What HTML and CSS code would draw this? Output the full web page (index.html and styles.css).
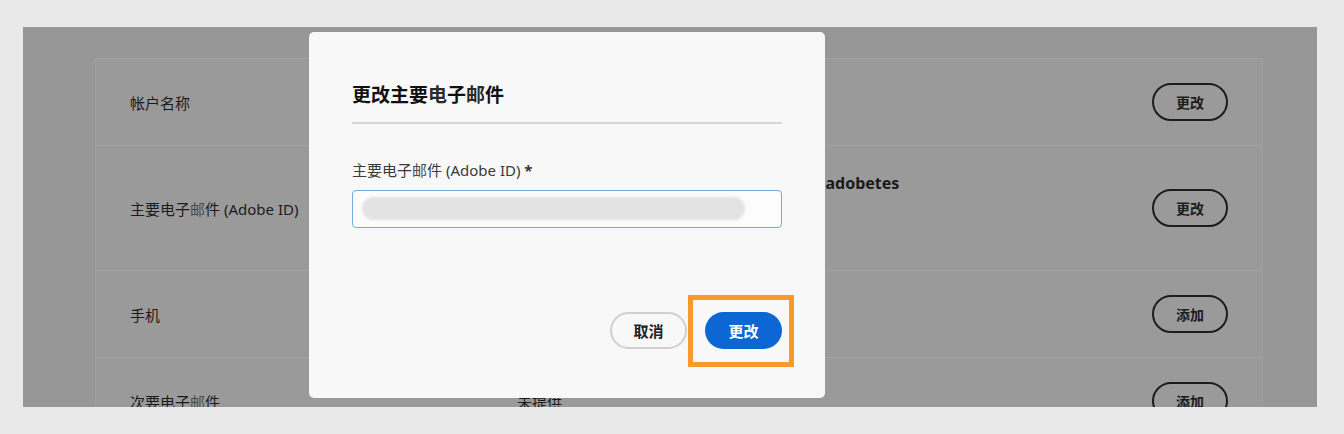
FILE: index.html
```html
<!doctype html>
<html>

<head>
    <title>帐户信息</title>
    <meta charset="utf-8">
    <link rel="stylesheet" href="styles.css">
</head>

<body>
    <div class="frame">
        <div class="card">
            <div class="row row-short">
                <span class="row-label">帐户名称</span>
                <span class="row-value"></span>
                <span class="pill">更改</span>
            </div>
            <div class="row row-tall">
                <span class="row-label">主要电子<span class="faint">邮</span>件 (Adobe ID)</span>
                <span class="row-value">
                    <b class="email">wang.xiaoming.marketing.dept.li012@adobetes</b>
                    <span class="sub">已验证</span>
                </span>
                <span class="pill">更改</span>
            </div>
            <div class="row row-short">
                <span class="row-label">手机</span>
                <span class="row-value"></span>
                <span class="pill">添加</span>
            </div>
            <div class="row row-short">
                <span class="row-label">次要电子<span class="faint">邮</span>件</span>
                <span class="row-value">未提供</span>
                <span class="pill">添加</span>
            </div>
        </div>

        <div class="modal">
            <h2 class="modal-title">更改主要<span class="thin">电</span>子<span class="thin">邮</span>件</h2>
            <label class="field-label">主要电子<span class="faint">邮</span>件 (Adobe ID) <span class="req">*</span></label>
            <div class="field">
                <span class="blurred"></span>
            </div>
            <div class="modal-footer">
                <span class="btn btn-secondary">取消</span>
                <span class="btn btn-primary">更改</span>
            </div>
            <span class="highlight"></span>
        </div>
    </div>
</body>

</html>
```

FILE: styles.css
```css
* {
    box-sizing: border-box;
}

body {
    margin: 0;
    background: #e9e9e9;
    font-family: "Noto Sans", "Noto Sans CJK SC", sans-serif;
    color: #1a1a1a;
}

.frame {
    position: relative;
    margin: 27px 0 0 23px;
    width: 1294px;
    height: 380px;
    background: #979797;
    overflow: hidden;
}

.card {
    margin: 31px 54px 0 72px;
    background: #9a9a9a;
    border: 1px solid #a1a1a1;
}

.row {
    display: flex;
    align-items: center;
    padding: 0 34px;
    border-bottom: 1px solid #a3a3a3;
    font-size: 15px;
}

.row-short {
    height: 87px;
}

.row-tall {
    height: 125px;
}

.row-label {
    width: 387px;
}

.row-value {
    flex: 1;
    display: flex;
    flex-direction: column;
    white-space: nowrap;
}

.row-tall .row-value {
    align-self: flex-start;
    padding-top: 26px;
}

.email {
    font-size: 16px;
}

.sub {
    margin-top: 6px;
}

.faint {
    color: #4a4a4a;
}

.pill {
    width: 76px;
    height: 38px;
    border: 2px solid #1c1c1c;
    border-radius: 19px;
    display: flex;
    align-items: center;
    justify-content: center;
    font-size: 14px;
    font-weight: bold;
    color: #1c1c1c;
}

.modal {
    position: absolute;
    left: 286px;
    top: 5px;
    width: 516px;
    height: 366px;
    background: #f8f8f8;
    border-radius: 5px;
    padding: 0 43px;
}

.modal-title {
    margin: 50px 0 0;
    padding-bottom: 14px;
    border-bottom: 2px solid #d6d6d6;
    font-size: 19px;
    line-height: 26px;
    font-weight: bold;
    color: #111;
}

.thin {
    font-weight: 600;
    color: #2a2a2a;
}

.field-label {
    display: block;
    margin-top: 36px;
    font-size: 15px;
    line-height: 20px;
    color: #3a3a3a;
}

.req {
    font-weight: bold;
}

.field {
    margin-top: 10px;
    height: 38px;
    border: 1px solid #73a9de;
    border-radius: 4px;
    background: #fcfcfc;
    padding: 6px 36px 0 9px;
}

.blurred {
    display: block;
    height: 23px;
    border-radius: 12px;
    background: #e3e3e3;
    filter: blur(1px);
}

.modal-footer {
    display: flex;
    justify-content: flex-end;
    gap: 18px;
    margin-top: 84px;
}

.btn {
    width: 77px;
    height: 37px;
    border-radius: 19px;
    display: flex;
    align-items: center;
    justify-content: center;
    font-size: 15px;
    font-weight: bold;
}

.btn-secondary {
    border: 2px solid #d0d0d0;
    color: #222;
    background: #f8f8f8;
}

.btn-primary {
    background: #0c66d3;
    color: #fff;
}

.highlight {
    position: absolute;
    left: 379px;
    top: 263px;
    width: 106px;
    height: 72px;
    border: 5px solid #f8992b;
}
```
